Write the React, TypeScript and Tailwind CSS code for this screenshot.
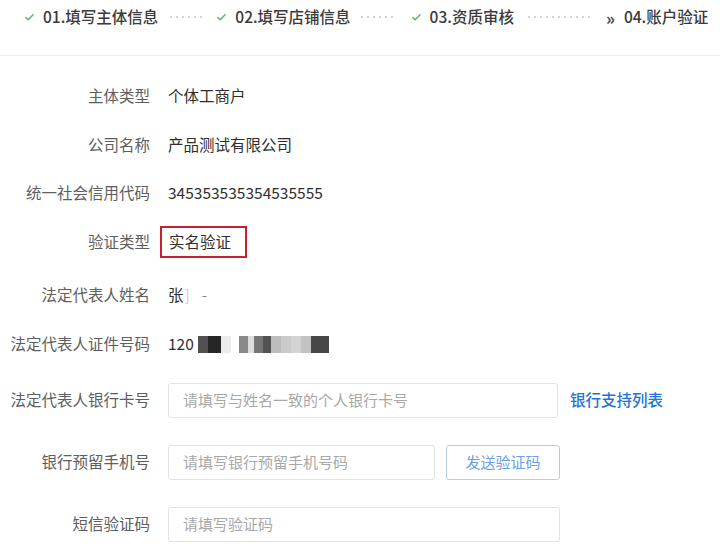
import { Check } from "lucide-react";

const FONT = "font-['Helvetica_Neue','Noto_Sans_CJK_SC',sans-serif]";

const STEPS = [
  { label: "01.填写主体信息", done: true, dots: "w-[36px] ml-[10px] mr-[12px]" },
  { label: "02.填写店铺信息", done: true, dots: "w-[36px] ml-[8px] mr-[16px]" },
  { label: "03.资质审核", done: true, dots: "w-[64px] ml-[12px] mr-[14px]" },
  { label: "04.账户验证", done: false, dots: "" },
];

function Dots({ className }: { className: string }) {
  return (
    <div
      className={`h-[2px] ${className}`}
      style={{
        backgroundImage: "radial-gradient(circle, #d4d4d4 0.8px, transparent 1px)",
        backgroundSize: "6px 2px",
      }}
    />
  );
}

function StepBar() {
  return (
    <div className="h-[56px] border-b border-[#ececec] pt-[6px] pl-[24px]">
      <div className="flex items-center h-[22px]">
        {STEPS.map((s, i) => (
          <div key={i} className="flex items-center">
            {s.done ? (
              <Check size={11} strokeWidth={3} className="text-[#52b862] mr-[8px]" />
            ) : (
              <span className="text-[17px] font-bold text-[#444] mr-[9px] ml-[2px] leading-none">»</span>
            )}
            <span className="text-[15.5px] text-[#3a3a3a] font-medium">{s.label}</span>
            {s.dots && <Dots className={s.dots} />}
          </div>
        ))}
      </div>
    </div>
  );
}

function Row({
  label,
  mt,
  children,
}: {
  label: string;
  mt: string;
  children: React.ReactNode;
}) {
  return (
    <div className={`flex items-center h-[36px] ${mt}`}>
      <div className="w-[150px] shrink-0 text-right text-[15.5px] text-[#5e5e5e]">{label}</div>
      <div className="ml-[18px] flex items-center text-[15.5px] text-[#2e2e2e]">{children}</div>
    </div>
  );
}

function Input({ placeholder, w }: { placeholder: string; w: string }) {
  return (
    <div
      className={`${w} h-[35px] border border-[#e3e3e3] rounded-[3px] flex items-center pl-[14px] text-[15px] text-[#a8a8a8]`}
    >
      {placeholder}
    </div>
  );
}

const BLUR = ["#505050", "#262626", "#ececec", "#ffffff", "#8a8a8a", "#dcdcdc", "#767676", "#525252", "#bdbdbd", "#cacaca", "#d3d3d3", "#c2c2c2", "#474747"];
const BLUR_W = [10, 13, 10, 8, 9, 6, 9, 8, 10, 10, 10, 10, 18];

export default function App() {
  return (
    <div className={`w-[720px] h-[551px] bg-white overflow-hidden ${FONT}`}>
      <StepBar />
      <div className="flex flex-col">
        <Row label="主体类型" mt="mt-[22px]">个体工商户</Row>
        <Row label="公司名称" mt="mt-[13px]">产品测试有限公司</Row>
        <Row label="统一社会信用代码" mt="mt-[12px]">345353535354535555</Row>
        <Row label="验证类型" mt="mt-[13px]">
          <div className="-ml-[8px] h-[32px] px-[7px] border-2 border-[#c8202e] flex items-center w-[87px]">
            实名验证
          </div>
        </Row>
        <Row label="法定代表人姓名" mt="mt-[17px]">
          <span>张</span>
          <span className="ml-[1px] text-[#ccc]">]</span>
          <span className="ml-[12px] text-[#888]">-</span>
        </Row>
        <Row label="法定代表人证件号码" mt="mt-[13px]">
          <span>120</span>
          <div className="flex ml-[4px] h-[17px] blur-[0.6px]">
            {BLUR.map((c, i) => (
              <div key={i} style={{ backgroundColor: c, width: BLUR_W[i] }} />
            ))}
          </div>
        </Row>
        <Row label="法定代表人银行卡号" mt="mt-[20px]">
          <Input placeholder="请填写与姓名一致的个人银行卡号" w="w-[390px]" />
          <span className="ml-[12px] text-[15.5px] font-medium text-[#2573d6]">银行支持列表</span>
        </Row>
        <Row label="银行预留手机号" mt="mt-[26px]">
          <Input placeholder="请填写银行预留手机号码" w="w-[267px]" />
          <div className="ml-[11px] w-[114px] h-[35px] border border-[#b4cdef] rounded-[3px] flex items-center justify-center text-[15px] text-[#6d9fe6]">
            发送验证码
          </div>
        </Row>
        <Row label="短信验证码" mt="mt-[26px]">
          <Input placeholder="请填写验证码" w="w-[392px]" />
        </Row>
      </div>
    </div>
  );
}
